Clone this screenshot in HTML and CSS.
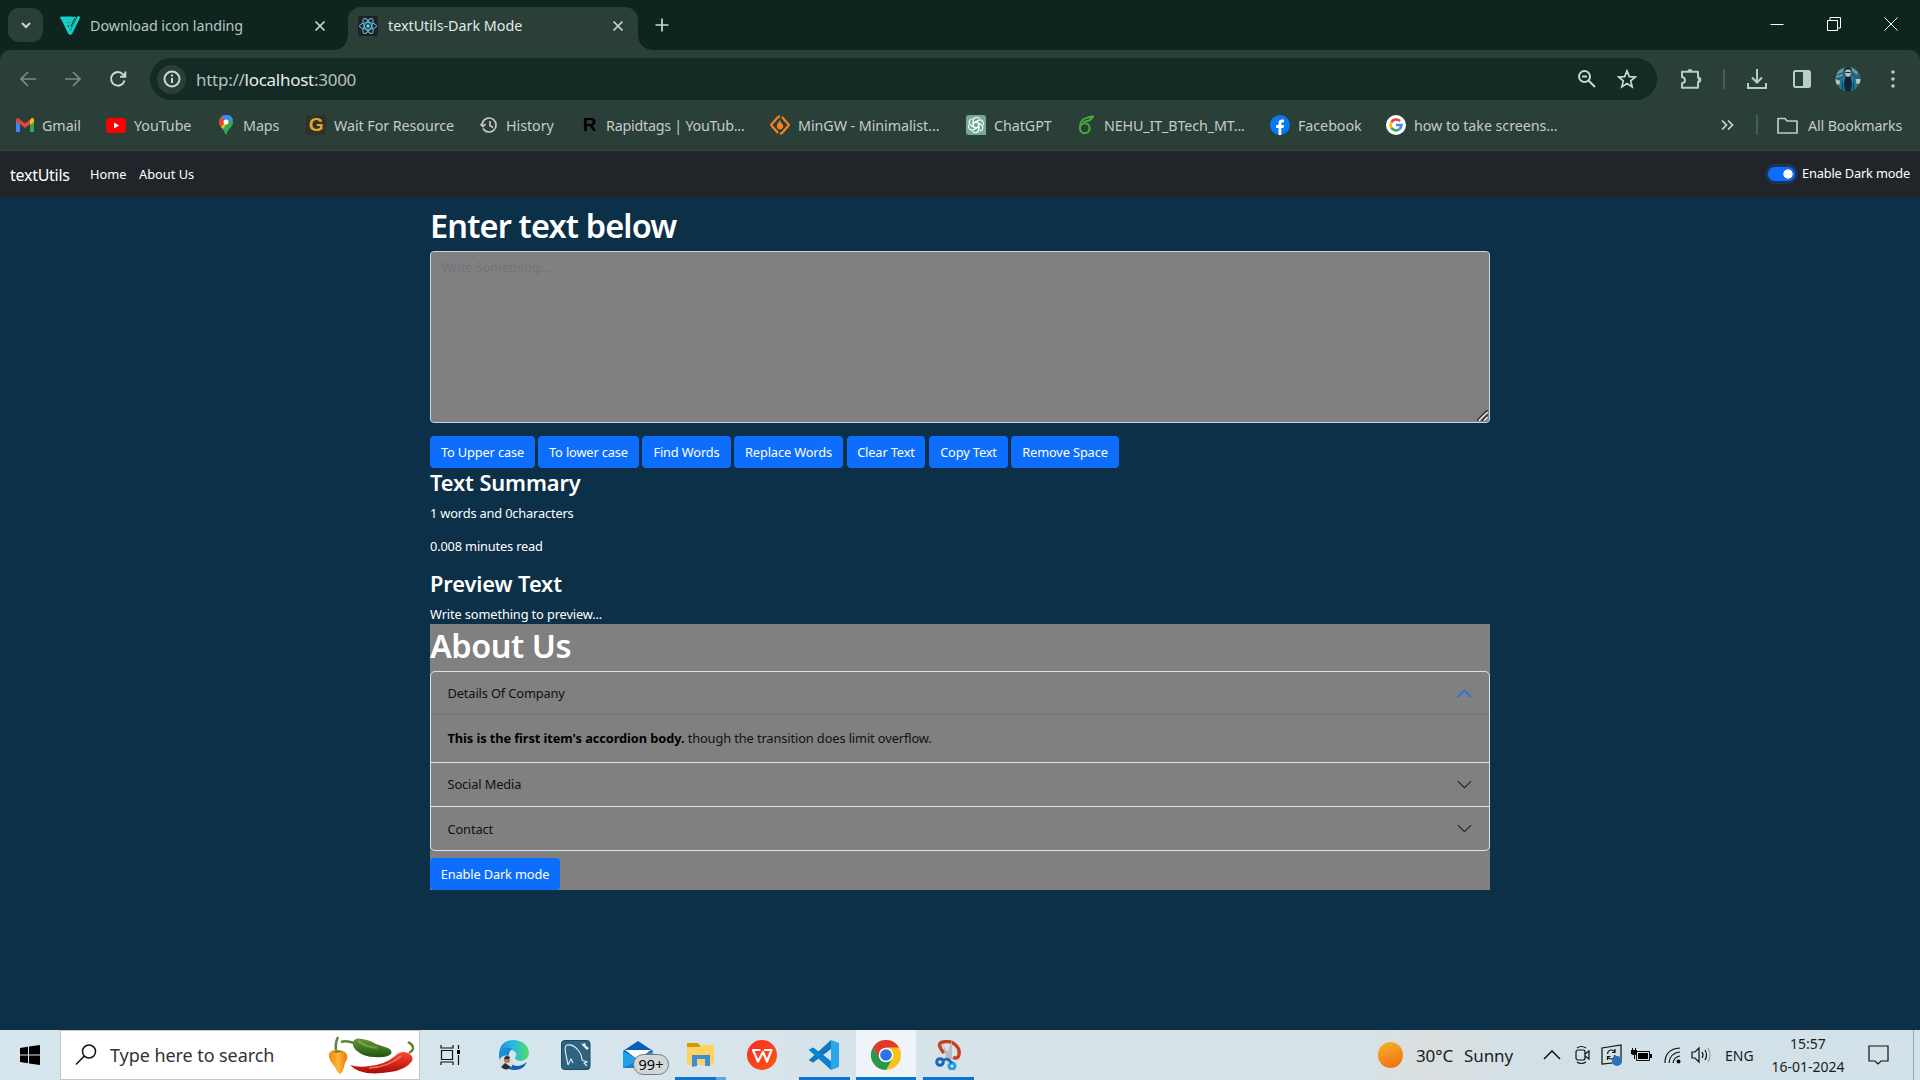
FILE: index.html
```html
<!DOCTYPE html>
<html lang="en">
<head>
<meta charset="utf-8">
<title>textUtils-Dark Mode</title>
<link rel="stylesheet" href="styles.css">
</head>
<body>
<div class="screen">

<header class="tabstrip">
  <div class="tab-search"><svg width="12" height="12" viewBox="0 0 12 12"><path d="M2 4l4 4 4-4" class="line w2"/></svg></div>
  <div class="tab">
    <svg class="fav" width="22" height="22" viewBox="0 0 22 22"><path d="M1.500 3h10.500L10.800 5.800H5L6 9h4.500M3 4.500L9.500 18q.7 1 1.400 0L18.500 2.500M9.500 13.500L14.500 3" fill="none" stroke="#16cfc6" stroke-width="2.900" stroke-linejoin="round" stroke-linecap="round"/><path d="M14.800 3.500L11 11.500" fill="none" stroke="#0e251e" stroke-width="1"/></svg>
    <span class="tab-title title-a">Download icon landing</span>
    <svg class="tab-x" width="12" height="12" viewBox="0 0 12 12"><path d="M1.500 1.500l9 9m0-9l-9 9" class="line w17"/></svg>
  </div>
  <div class="tab active">
    <svg class="fav" width="20" height="20" viewBox="0 0 20 20"><rect width="20" height="20" rx="2" fill="#202225"/><g fill="none" stroke="#5fc3dd"><ellipse cx="10" cy="10" rx="8.500" ry="3.300"/><ellipse cx="10" cy="10" rx="8.500" ry="3.300" transform="rotate(60 10 10)"/><ellipse cx="10" cy="10" rx="8.500" ry="3.300" transform="rotate(120 10 10)"/></g><circle cx="10" cy="10" r="1.700" fill="#61dafb"/></svg>
    <span class="tab-title title-b">textUtils-Dark Mode</span>
    <svg class="tab-x" width="12" height="12" viewBox="0 0 12 12"><path d="M1.500 1.500l9 9m0-9l-9 9" class="line w17"/></svg>
  </div>
  <svg class="plus" width="14" height="14" viewBox="0 0 14 14"><path d="M7 .5v13M.5 7h13" class="line w17"/></svg>
  <div class="window-controls">
    <svg width="14" height="14" viewBox="0 0 14 14"><path d="M.5 7.500h13" class="line white"/></svg>
    <svg width="14" height="14" viewBox="0 0 14 14"><path d="M.5 3.500h10v10H.5zM3 3V.5h10.500V11H11" class="line white"/></svg>
    <svg width="14" height="14" viewBox="0 0 14 14"><path d="M.5.5l13 13m0-13l-13 13" class="line white"/></svg>
  </div>
</header>

<div class="toolbar">
  <div class="nav-icons">
    <svg class="dim" width="18" height="18" viewBox="0 0 18 18"><path d="M17 9H2m7-7L2 9l7 7" class="line w17"/></svg>
    <svg class="dim" width="18" height="18" viewBox="0 0 18 18"><path d="M1 9h15M9 2l7 7-7 7" class="line w17"/></svg>
    <svg width="18" height="18" viewBox="0 0 18 18"><path d="M15.500 10.500A6.800 6.800 0 1 1 14 4.300l2 2.200M16.300 1.500v5.300H11" class="line w2"/></svg>
  </div>
  <div class="omnibox">
    <span class="info"><svg width="18" height="18" viewBox="0 0 18 18"><circle cx="9" cy="9" r="7.500" class="line w2"/><path d="M9 8v5M9 4.500v2" class="line w2"/></svg></span>
    <span class="url">http://<b>localhost</b>:3000</span>
    <span class="omni-end">
      <svg width="20" height="20" viewBox="0 0 20 20"><circle cx="7.500" cy="7.500" r="5.500" class="line w2"/><path d="M11.500 11.500L18 18M5 7.500h5" class="line w2"/></svg>
      <svg width="20" height="20" viewBox="0 0 20 20"><path d="M10 1.800l2.300 5.800 6 .4-4.600 3.900 1.500 6L10 14.600l-5.200 3.300 1.500-6L1.700 8l6-.4z" class="line w17"/></svg>
    </span>
  </div>
  <div class="tools">
    <svg class="s1" width="22" height="22" viewBox="0 0 22 22"><path d="M2 3.800h16v5.700q2.300 0 2.300 2.200T18 14v5.800H2v-4.600q3-.4 3-3T2 9z" class="line w2" stroke-linejoin="round"/><path d="M7.500 3.500a2.500 2.500 0 0 1 5 0zM18 9.300a2.500 2.500 0 0 1 0 5z" fill="#b6cec5"/></svg>
    <i class="bar"></i>
    <svg class="s2" width="22" height="22" viewBox="0 0 22 22"><path d="M11 1v13M6 9.500l5 5 5-5M2 15v5h18v-5" class="line w2"/></svg>
    <svg class="s3" width="18" height="20" viewBox="0 0 18 20"><rect x="1" y="2" width="16" height="16" rx="1.500" class="line w2"/><path d="M10 2h7v16h-7z" fill="#b6cec5"/></svg>
    <svg class="s3" width="26" height="26" viewBox="0 0 26 26"><clipPath id="face"><circle cx="13" cy="13" r="12.500"/></clipPath><g clip-path="url(#face)"><path fill="#2c6274" d="M0 0h26v26H0z"/><path fill="#5f9dab" d="M2 5l7-3-1 4-7 3zm14-4l7 5-1 3-5-4zM1 10l7-2v2l-7 2z"/><path fill="#c4c3b4" d="M0 13l6 2 1 4-7-1zm20 0l6 0v4l-5 1z"/><path fill="#1d7796" d="M5 14q1-3 5-4h6q4 1 5 4l1 12H4z"/><path fill="#122335" d="M10.500 10.500h5L17 18l-1 8h-6l-1-8z"/><path fill="#14425a" d="M7 16h1v10H7zm11 0h1v10h-1z"/><ellipse cx="13" cy="6.800" rx="2.800" ry="4" fill="#c3b9b7"/><path fill="#172832" d="M9.500 6q-.5-5 3.500-5t3.500 5l-1.500-2.500h-4zM10.500 6h5v1h-5z"/></g></svg>
    <svg class="s3" width="6" height="18" viewBox="0 0 6 18"><g fill="#b6cec5"><circle cx="3" cy="2" r="1.800"/><circle cx="3" cy="9" r="1.800"/><circle cx="3" cy="16" r="1.800"/></g></svg>
  </div>
</div>

<nav class="bookmarks">
  <span class="bm"><svg width="18" height="14" viewBox="0 0 18 14"><path d="M0 2v12h4V6z" fill="#4285f4"/><path d="M18 2v12h-4V6z" fill="#34a853"/><path d="M0 2q0-2 2-2l7 5.500L16 0q2 0 2 2v1L9 10 0 3z" fill="#ea4335"/><path d="M14 2l2-2q2 0 2 2v2l-4 3z" fill="#fbbc04"/></svg>Gmail</span>
  <span class="bm"><svg width="20" height="15" viewBox="0 0 20 15"><rect width="20" height="15" rx="3.500" fill="#f00"/><path d="M8 4.500v6l5-3z" fill="#fff"/></svg>YouTube</span>
  <span class="bm maps"><svg width="14" height="20" viewBox="0 0 14 20"><path d="M7 0a7 7 0 0 1 7 7c0 5-5 6-7 13C5 13 0 12 0 7a7 7 0 0 1 7-7z" fill="#34a853"/><path d="M2 2a7 7 0 0 1 12 3L8 8z" fill="#4285f4"/><path d="M2 2l5 4-5 6Q-1.500 6 2 2z" fill="#ea4335"/><path d="M2 12l9-9 2 6-8 6z" fill="#fbbc04"/><path d="M7 20c1-7 7-8 7-13L12 3 4 14z" fill="#34a853"/><path d="M7 0q4 0 6 3L9 7 4 1z" fill="#4285f4"/><circle cx="7" cy="7" r="2.500" fill="#fff"/></svg>Maps</span>
  <span class="bm"><span class="letter g">G</span>Wait For Resource</span>
  <span class="bm"><svg width="18" height="18" viewBox="0 0 18 18"><path d="M3 5.500A7 7 0 1 1 3 12.500M.5 8L3 10.500 5.500 8M10 5v4.500l3 2M3 5.500q-1 2-.5 4.500" class="line w17 soft"/></svg>History</span>
  <span class="bm rapid"><span class="letter r">R</span>Rapidtags | YouTub...</span>
  <span class="bm"><svg width="20" height="20" viewBox="0 0 20 20"><path d="M8 2l-7 8 7 8M12 2l7 8-7 8M8 2l2-1M12 18l-2 1" fill="none" stroke="#f5811f" stroke-width="2.300"/><path d="M10 4q0 3 2 4.500t1 4q-1 2-3 2t-3-2Q6 10 8 8t2-4z" fill="#f5811f"/></svg>MinGW - Minimalist...</span>
  <span class="bm"><svg width="20" height="20" viewBox="0 0 20 20"><path d="M3 0h14q3 0 3 3v17H3q-3 0-3-3V3q0-3 3-3z" fill="#74aa9c"/><g fill="none" stroke="#fff" stroke-width="1.100"><path id="knot" d="M7.200 12V6q0-3.200 3-3.700 2.200-.2 3.500 1.500M7.200 8.500l4.600-2.700"/><use href="#knot" transform="rotate(60 10 10)"/><use href="#knot" transform="rotate(120 10 10)"/><use href="#knot" transform="rotate(180 10 10)"/><use href="#knot" transform="rotate(240 10 10)"/><use href="#knot" transform="rotate(300 10 10)"/></g></svg>ChatGPT</span>
  <span class="bm nehu"><svg width="16" height="20" viewBox="0 0 16 20"><ellipse cx="6.800" cy="13.300" rx="4.800" ry="5" fill="none" stroke="#46ae3a" stroke-width="2"/><path d="M2 13Q2 5 7 3.500q3-1.500 8-2-2 4-6 4.500L5 7" fill="none" stroke="#46ae3a" stroke-width="1.800"/></svg>NEHU_IT_BTech_MT...</span>
  <span class="bm"><svg width="20" height="20" viewBox="0 0 20 20"><circle cx="10" cy="10" r="10" fill="#0879f5"/><path d="M8.500 20v-7H6v-3h2.500V8q0-4 5.500-3.300v2.500q-2.700-.3-2.700 1.300V10H14l-.5 3h-2.200v7z" fill="#fff"/></svg>Facebook</span>
  <span class="bm"><svg width="20" height="20" viewBox="0 0 20 20"><circle cx="10" cy="10" r="10" fill="#fff"/><g fill="none" stroke-width="2.600"><path d="M5.300 7.300A5.400 5.400 0 0 1 14 6.200" stroke="#ea4335"/><path d="M5.300 7.300a5.500 5.500 0 0 0 0 5.400" stroke="#fbbc04"/><path d="M5.300 12.700a5.400 5.400 0 0 0 8 1.600" stroke="#34a853"/><path d="M13.300 14.300A5.500 5.500 0 0 0 15.400 10H10" stroke="#4285f4"/></g></svg>how to take screens...</span>
  <svg class="more" width="13" height="12" viewBox="0 0 13 12"><path d="M1 1.500L5.500 6 1 10.500M7 1.500L11.500 6 7 10.500" class="line w17"/></svg>
  <i class="bar"></i>
  <span class="bm all"><svg width="21" height="17" viewBox="0 0 21 17"><path d="M1 1.500h7l2 2.500h10v12H1z" class="line w17 soft" stroke-linejoin="round"/></svg>All Bookmarks</span>
</nav>

<nav class="navbar">
  <span class="brand">textUtils</span><span class="link home">Home</span><span class="link">About Us</span>
  <span class="switch"></span><span class="switch-label">Enable Dark mode</span>
</nav>

<main class="page">
  <div class="container">
    <h1>Enter text below</h1>
    <div class="field">
      <textarea class="editor" placeholder="Write Something..."></textarea>
      <svg class="grip" width="11" height="11" viewBox="0 0 11 11"><path d="M0 10.500L10.500 0M5 10.500L10.500 5" fill="none" stroke="#222" stroke-width="1.300"/><path d="M1.800 10.500l8.700-8.700M7 10.500L10.500 7" fill="none" stroke="#eee" stroke-width="1.200"/></svg>
    </div>
    <div class="buttons">
      <button class="btn b1">To Upper case</button><button class="btn b2">To lower case</button><button class="btn b3">Find Words</button><button class="btn b4">Replace Words</button><button class="btn b5">Clear Text</button><button class="btn b6">Copy Text</button><button class="btn b7">Remove Space</button>
    </div>
    <h3>Text Summary</h3>
    <p>1 words and 0characters</p>
    <p>0.008 minutes read</p>
    <h3>Preview Text</h3>
    <p class="last">Write something to preview...</p>
    <section class="about">
      <h1>About Us</h1>
      <div class="accordion">
        <div class="acc-head first">Details Of Company<svg width="17" height="17" viewBox="0 0 16 16"><path d="M2 11l6-6 6 6" fill="none" stroke="#0d6efd" stroke-width="1.200" stroke-linecap="round"/></svg></div>
        <div class="acc-body"><strong>This is the first item's accordion body.</strong> though the transition does limit overflow.</div>
        <div class="acc-head up">Social Media<svg width="17" height="17" viewBox="0 0 16 16"><path d="M2 5l6 6 6-6" fill="none" stroke="#212529" stroke-linecap="round"/></svg></div>
        <div class="acc-head">Contact<svg width="17" height="17" viewBox="0 0 16 16"><path d="M2 5l6 6 6-6" fill="none" stroke="#212529" stroke-linecap="round"/></svg></div>
      </div>
      <button class="btn b8">Enable Dark mode</button>
    </section>
  </div>
</main>

<footer class="taskbar">
  <div class="start"><svg width="20" height="20" viewBox="0 0 20 20"><path d="M0 3l8-1.200V9.500H0zM9 1.600L20 0v9.500H9zM0 10.500h8v7.700L0 17zM9 10.500h11V20L9 18.400z"/></svg></div>
  <div class="search">
    <svg width="22" height="22" viewBox="0 0 22 22"><circle cx="14" cy="7.500" r="6.500" class="line ink w15"/><path d="M9.300 12L1 20.500" class="line ink w15"/></svg>
    <span>Type here to search</span>
    <svg class="peppers" width="86" height="40" viewBox="0 0 86 40">
      <defs><linearGradient id="gr" x1="0" y1="0" x2="0" y2="1"><stop offset="0" stop-color="#6a9a3a"/><stop offset="1" stop-color="#1e5410"/></linearGradient><linearGradient id="rd" x1="0" y1="0" x2="0" y2="1"><stop offset="0" stop-color="#ff4a35"/><stop offset="1" stop-color="#a90808"/></linearGradient><linearGradient id="og" x1="0" x2="1"><stop offset="0" stop-color="#f78308"/><stop offset=".5" stop-color="#ffb53c"/><stop offset="1" stop-color="#ee7804"/></linearGradient></defs>
      <path d="M8 17q-1-9 2-15" fill="none" stroke="#5f8434" stroke-width="2.500"/><path d="M1 19q1-3 5-4 8-1 12 3 3 4-1 10-2 10-5 11-2 0-5-7Q0 24 1 19z" fill="url(#og)"/><path d="M4 18q4-4 8-2l3 2-4-1-3 1-2-1z" fill="#5f8434"/>
      <path d="M13 7q5-2 13 1" fill="none" stroke="#5f8434" stroke-width="2.500"/><path d="M25 7q2-5 9-3 8 1 14 5l12 4q5 3 3 6-5 4-16 3-11 0-18-6-5-4-4-9z" fill="url(#gr)"/><path d="M30 6q8 6 19 7" fill="none" stroke="#a7c47b" stroke-width="2" opacity=".5"/>
      <path d="M81 18q7-4 2-9l-3-2" fill="none" stroke="#5f8434" stroke-width="2.500"/><path d="M22 30q9 3 20 1 16-2 25-10 6-6 13-3 6 3 4 8-6 9-22 11-29 5-40-7z" fill="url(#rd)"/><path d="M41 33q20-1 32-12" fill="none" stroke="#ff9585" stroke-width="1.500" opacity=".7"/>
    </svg>
  </div>
  <div class="apps">
    <div class="app"><svg width="22" height="22" viewBox="0 0 22 22"><path d="M2 1v3h12V1M2 21v-3h12v3M2.500 6.500h11v9h-11zM19.500 1v4M19.500 11v10" class="line ink w12"/><path d="M18 6h3v4h-3z"/></svg></div>
    <div class="app"><svg width="32" height="32" viewBox="0 0 32 32"><defs><linearGradient id="ed" x1="0" x2="1"><stop offset="0" stop-color="#1593df"/><stop offset=".5" stop-color="#28bddd"/><stop offset="1" stop-color="#55dc5c"/></linearGradient></defs><path d="M1 15Q2 1 16 1q13 1 15 12 0 8-8 9-5 0-6-3 3-4-1-7-7-5-15 3z" fill="url(#ed)"/><path d="M1 15q5-8 13-5-6 5-2 13 6 8 17 0-4 9-14 8Q1 29 1 15z" fill="#1260b4"/><path d="M1 15q5-8 13-5-5 2-5 9l-7 4z" fill="#1b8fdc"/><circle cx="8" cy="23.500" r="7" fill="#d7dedf"/><circle cx="9" cy="21" r="3" fill="#ad7865"/><path d="M6 20q1-5 6-2l-1 2zM3 28l4-4 3 2 3 2q-4 5-10 0z" fill="#26303a"/></svg></div>
    <div class="app"><svg width="30" height="30" viewBox="0 0 30 30"><rect x=".5" y=".5" width="28.500" height="29" rx="3" fill="#2f627f" stroke="#1d4a61"/><path d="M7 25q-1-6-2-10-2-9 1-10 6-1 11 5 4 5 4 10l5 2-3 1 3 3M7 25l3-6 2 4" fill="none" stroke="#e5eff3" stroke-width="1.100"/><path d="M20 3l2 3 4 4 2-2-3-2-1-3-2 1z" fill="#e5eff3"/></svg></div>
    <div class="app"><svg width="30" height="30" viewBox="0 0 30 30"><path d="M0 11L15 1l15 10v17H0z" fill="#0a5db4"/><path d="M2 10h26L15 20z" fill="#f7fbfd"/><path d="M0 11l15 8 15-8v17H0z" fill="#23a0e8"/><path d="M0 28l17-9 13 9z" fill="#1381d2"/></svg><span class="badge">99+</span></div>
    <div class="app run files"><svg width="30" height="30" viewBox="0 0 30 30"><path d="M2 3h11l3 4H2z" fill="#d99700"/><path d="M2 7l13 0 2-2h12v20H2z" fill="#fed362"/><path d="M7 27V15h18v11h-5v-7h-8v7z" fill="#3c8fd5"/></svg></div>
    <div class="app"><svg width="30" height="30" viewBox="0 0 30 30"><defs><linearGradient id="wp" x2="1" y2="1"><stop stop-color="#fa2828"/><stop offset="1" stop-color="#fb5910"/></linearGradient></defs><circle cx="15" cy="15" r="15" fill="url(#wp)"/><path d="M13.500 10H6l5 11.500L16 12l4 9.500L24.500 10H17" fill="none" stroke="#fff" stroke-width="2.200" stroke-linejoin="round"/></svg></div>
    <div class="app run"><svg width="30" height="30" viewBox="0 0 30 30"><path d="M22 0L1 19q-2 1 0 2l2 1q1 1 2 0L22 9z" fill="#1377bc"/><path d="M22 30L1 11q-2-1 0-2l2-1q1-1 2 0l17 13z" fill="#0b83cf"/><path d="M22 0l8 3v24l-8 3z" fill="#29a6ec"/></svg></div>
    <div class="app run current"><svg width="30" height="30" viewBox="0 0 30 30"><circle cx="15" cy="15" r="15" fill="#fbc117"/><path d="M2 7.500A15 15 0 0 1 28 7.500H15L8.500 19z" fill="#de3b2d"/><path d="M2 7.500A15 15 0 0 0 15 30l6.500-11.500H8.500z" fill="#26994a"/><circle cx="15" cy="15" r="7.300" fill="#fff"/><circle cx="15" cy="15" r="5.800" fill="#2e72e8"/></svg></div>
    <div class="app run"><svg width="28" height="30" viewBox="0 0 28 30"><path d="M10 13Q3 5 7 2.500q9-2.500 14 2 5 4 4 10-1 5-6 3" fill="none" stroke="#c8421c" stroke-width="3.500"/><path d="M9 4l8 15-4 4zM18 1v18l-5 4-2-6z" fill="#b9bcc0"/><circle cx="6" cy="22" r="3.300" fill="none" stroke="#1869bb" stroke-width="3"/><circle cx="18" cy="26" r="3" fill="none" stroke="#289ee1" stroke-width="3"/><path d="M8 20l6-1 4 4" fill="none" stroke="#1869bb" stroke-width="2.500"/></svg></div>
  </div>
  <div class="tray">
    <span class="sun"></span><span class="weather">30°C<span>Sunny</span></span>
    <svg class="t1" width="18" height="10" viewBox="0 0 18 10"><path d="M1 9l8-8 8 8" class="line ink w15"/></svg>
    <svg class="t2" width="16" height="20" viewBox="0 0 16 20"><rect x="1" y="5" width="9" height="10" rx="2" class="line ink w12"/><path d="M10 9l4-3v8l-4-3M2 3q4-3 9 0M2 17q4 3 9 0" class="line ink w12"/></svg>
    <svg class="t3" width="22" height="22" viewBox="0 0 22 22"><path d="M1 4l19-3v17L1 20z" class="line ink w12"/><path d="M6.500 10q.5-4 4-4 2 0 3.500 2M14 5v3.500h-3M14 11q-.5 4-4 4-2 0-3.500-2M6.500 16v-3.500h3" class="line ink w12"/><circle cx="16" cy="17" r="5" fill="#2b72ba"/></svg>
    <svg class="t4" width="21" height="14" viewBox="0 0 21 14"><path d="M5.500 3.500h13v9h-13z" class="line ink"/><path d="M7 5h10v6H7zM19 6h2v4h-2zM0 2h6v4q-3 2-6 0zM1 0h1v2H1zM4 0h1v2H4zM3 6h1v5H3z"/></svg>
    <svg class="t5" width="18" height="18" viewBox="0 0 18 18"><path d="M1 17Q1 3 16 2M5 17Q6 7 16 6M9 17q1-6 7-7" class="line ink w12"/><circle cx="14.500" cy="15.500" r="2"/></svg>
    <svg class="t6" width="21" height="18" viewBox="0 0 21 18"><path d="M1 6h3l4-4v14l-4-4H1zM11 6q2 3 0 6M14 4q3 5 0 10" class="line ink w12"/><path d="M17 2q4 7 0 14" class="line w12 muted"/></svg>
    <span class="lang">ENG</span>
    <span class="clock"><span>15:57</span><span>16-01-2024</span></span>
    <svg class="t7" width="21" height="21" viewBox="0 0 21 21"><path d="M1 1h19v15h-7l-3 3-3-3H1z" class="line ink w12"/></svg>
    <i class="peek"></i>
  </div>
</footer>
</div>
</body>
</html>
```
FILE: styles.css
```css
* { box-sizing: border-box; }
body { margin: 0; font-family: "Noto Sans", "Open Sans", sans-serif; }
svg { display: block; flex: none; }
.screen { width: 1920px; height: 1080px; overflow: hidden; display: flex; flex-direction: column; background: #0e251e; }

.line { fill: none; stroke: #c9d8d2; stroke-width: 1; }
.w12 { stroke-width: 1.2; }
.w15 { stroke-width: 1.5; }
.w17 { stroke-width: 1.7; }
.w2 { stroke-width: 2; }
.white { stroke: #fff; }
.ink { stroke: #111; }
.soft { stroke: #c7c7c7; }
.muted { stroke: #8e9da2; }
.dim { opacity: .5; }
.bar { width: 2px; height: 20px; background: #455d53; flex: none; }

/* Tab strip */
.tabstrip { height: 50px; flex: none; display: flex; align-items: flex-start; }
.tab-search { width: 35px; height: 34px; margin: 8px 0 0 8px; border-radius: 11px; background: #2a3f38; display: grid; place-items: center; }
.tab { display: flex; align-items: center; height: 43px; margin-top: 7px; padding-bottom: 6px; width: 305px; padding-left: 17px; color: #b8c7c1; }
.tab-title { font-size: 14.3px; margin-left: 8px; white-space: nowrap; }
.title-a { letter-spacing: -.05px; }
.tab-x { margin-left: auto; margin-right: 22px; }
.tab.active { position: relative; width: 290px; padding-left: 10px; background: #2a3f38; border-radius: 13px 13px 0 0; color: #e2ebe7; }
.tab.active .tab-title { margin-left: 10px; }
.tab.active .tab-x { margin-right: 14.500px; }
.tab.active::before, .tab.active::after { content: ""; position: absolute; bottom: 0; width: 14px; height: 14px; }
.tab.active::before { left: -14px; background: radial-gradient(circle at 0 0, transparent 13.500px, #2a3f38 14px); }
.tab.active::after { right: -14px; background: radial-gradient(circle at 100% 0, transparent 13.500px, #2a3f38 14px); }
.plus { margin: 18px 0 0 17px; }
.window-controls { margin: 17px 22px 0 auto; display: flex; gap: 43px; }

/* Toolbar */
.toolbar { height: 50px; flex: none; display: flex; align-items: flex-end; background: #2a3f38; border-radius: 10px 10px 0 0; }
.nav-icons { display: flex; width: 150px; height: 42px; align-items: center; gap: 27px; padding-left: 18.500px; }
.omnibox { width: 1507px; height: 42px; border-radius: 21px; background: #142a25; display: flex; align-items: center; padding-left: 7px; }
.info { width: 29px; height: 29px; border-radius: 50%; background: #2a3f38; display: grid; place-items: center; }
.url { margin-left: 10px; font-size: 17px; color: #b6c0bc; letter-spacing: -.27px; }
.url b { font-weight: 400; color: #e6edea; }
.omni-end { margin-left: auto; display: flex; gap: 20px; padding-right: 20px; }
.tools { display: flex; height: 42px; align-items: center; flex: 1; padding-left: 23px; }
.tools .line { stroke: #b6cec5; }
.tools .bar { margin-left: 21px; }
.s2 { margin-left: 21px; }
.s3 { margin-left: 25px; }
.s3 + .s3 { margin-left: 24px; }
.s3 + .s3 + .s3 { margin-left: 29px; }

/* Bookmarks */
.bookmarks { height: 51px; flex: none; background: #2a3f38; padding-left: 16px; display: grid; align-items: center; grid-template-columns: 90px 113px 87px 174px 101px 189px 196px 112px 192px 116px 335px 35px 21px 1fr; color: #c6ccc9; font-size: 14.300px; letter-spacing: -.06px; border-bottom: 1px solid #35463f; }
.bm { display: flex; align-items: center; gap: 8px; white-space: nowrap; }
.bm.maps, .bm.nehu { gap: 10px; }
.bm.nehu { letter-spacing: -.13px; }
.bm.rapid { letter-spacing: -.24px; }
.bm.all { gap: 10px; letter-spacing: -.15px; }
.letter { width: 20px; height: 20px; display: grid; place-items: center; font: 700 19px/20px "Liberation Sans", sans-serif; }
.letter.g { background: #32302f; color: #dfa925; }
.letter.r { color: #000; width: 17px; }

/* Site navbar */
.navbar { height: 47px; flex: none; display: flex; align-items: center; padding: 0 10px; background: #212529; color: #fff; font-size: 12.800px; }
.brand { font-size: 16px; width: 80px; letter-spacing: -.27px; }
.link { padding-bottom: 2px; }
.home { width: 49px; }
.switch { margin-left: auto; margin-bottom: 1px; width: 27px; height: 14px; border-radius: 7px; box-shadow: 0 0 0 3px #1c3557; background: radial-gradient(circle at 20px 7px, #fff 4.300px, transparent 5px) #0d6efd; }
.switch-label { margin-left: 7px; padding-bottom: 3px; letter-spacing: -.17px; }

/* Page content */
.page { height: 832px; flex: none; background: #0c3047; color: #fff; font-size: 12.800px; letter-spacing: -.16px; }
.container { width: 1060px; margin: 0 auto; }
h1, h3, p { margin: 0; }
h1 { font-size: 32.500px; line-height: 40px; font-weight: 600; padding-top: 8px; height: 53px; letter-spacing: -.85px; }
.field { position: relative; }
.editor { display: block; width: 1060px; height: 172px; border: 1px solid #ced4da; border-radius: 4px; background: gray; padding: 5px 10px; font: 12.800px/20px "Noto Sans", sans-serif; letter-spacing: -.16px; resize: none; }
.editor::placeholder { color: #6c757d; opacity: 1; }
.grip { position: absolute; right: 2px; bottom: 2px; }
.buttons { display: flex; padding-top: 13px; }
.btn { height: 32px; padding: 0; border: 0; border-radius: 4px; background: #0d6efd; color: #fff; font: 12.800px/20px "Noto Sans", sans-serif; white-space: nowrap; letter-spacing: -.13px; }
.b1 { width: 105px; margin-right: 3px; }
.b2 { width: 101px; margin-right: 3px; }
.b3 { width: 89px; margin-right: 3px; }
.b4 { width: 109px; margin-right: 4px; }
.b5 { width: 78px; margin-right: 4px; }
.b6 { width: 79px; margin-right: 3px; }
.b7 { width: 108px; }
.b8 { width: 130px; display: block; }
h3 { font-size: 21.800px; line-height: 28px; font-weight: 600; height: 35px; padding-top: 1px; letter-spacing: -.1px; }
p { line-height: 20px; height: 33px; }
.last { height: 20px; letter-spacing: -.12px; }
.about { background: gray; height: 266px; }
.about h1 { padding-top: 2px; height: 47px; letter-spacing: -.47px; }
.accordion { border: 1px solid #dee2e6; border-radius: 5px; height: 180px; margin-bottom: 7px; color: #111; letter-spacing: -.12px; }
.acc-head { height: 44px; border-top: 1px solid #dee2e6; display: flex; align-items: center; justify-content: space-between; padding: 0 16.500px; }
.acc-head.up { padding-bottom: 1px; }
.acc-head.first { height: 43px; border-top: 0; border-bottom: 1px solid #737373; }
.acc-body { height: 47px; line-height: 47px; padding-left: 16.500px; letter-spacing: -.1px; }
.acc-body strong { color: #000; letter-spacing: -.08px; }

/* Taskbar */
.taskbar { height: 50px; flex: none; display: flex; background: linear-gradient(90deg, #d7e6ed 0, #d6e3e9 70%, #d9dfdf 74.500%, #d3e1e7 79%, #d2e2e8); }
.start { width: 60px; display: grid; place-items: center; }
.search { width: 360px; height: 50px; background: #fff; border: 1px solid #c4c8ca; display: flex; align-items: center; padding-left: 14px; font-size: 18px; letter-spacing: -.07px; color: #333; }
.search span { margin-left: 13px; width: 218px; }
.peppers { margin-top: -1px; }
.apps { display: flex; }
.app { width: 60px; height: 50px; margin-right: 2px; display: grid; place-items: center; position: relative; }
.app:first-child { margin-right: 4px; }
.run::after { content: ""; position: absolute; left: 5px; right: 4px; bottom: 0; height: 3px; background: #0878d4; }
.run.files::after { background: linear-gradient(90deg, #0878d4 41px, #62a8df 41px); }
.current { background: #eef4f7; }
.current::after { left: 0; right: 0; }
.badge { position: absolute; left: 25px; top: 24px; width: 36px; height: 21px; border: 1px solid #777; border-radius: 11px; background: #d2d7da; font-size: 14.500px; line-height: 19px; text-align: center; color: #000; }
.tray { margin-left: auto; width: 542px; display: flex; align-items: center; color: #1b1b1b; }
.sun { width: 25px; height: 26px; border-radius: 50%; background: linear-gradient(160deg, #f0b62e, #f4690b); }
.weather { margin-left: 13px; width: 127px; font-size: 17px; letter-spacing: -.1px; }
.weather span { margin-left: 11px; }
.t1 { margin-right: 14px; }
.t2 { margin-right: 10px; }
.t3 { margin-right: 8px; }
.t4 { margin-right: 12px; }
.t5 { margin-right: 9px; }
.t6 { margin-right: 13px; }
.lang { font-size: 14px; width: 45px; }
.clock { width: 76px; display: flex; flex-direction: column; align-items: center; font-size: 14px; line-height: 23px; }
.t7 { margin-left: 22px; }
.peek { margin-left: 24px; width: 1px; height: 50px; background: #97a8af; }
```
